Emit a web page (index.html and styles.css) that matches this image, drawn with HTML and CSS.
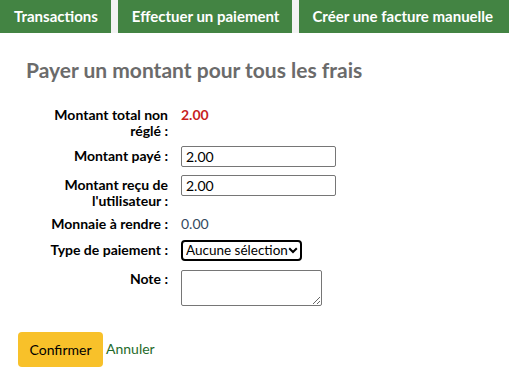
FILE: index.html
```html
<!DOCTYPE html>
<html lang="fr">
<head>
  <meta charset="UTF-8" />
  <meta name="viewport" content="width=device-width, initial-scale=1.0" />
  <title>Payer un montant</title>
  <link rel="stylesheet" href="styles.css">
</head>
<body>
  <div class="toolbar">
    <a class="tab" href="#">Transactions</a>
    <a class="tab" href="#">Effectuer un paiement</a>
    <a class="tab" href="#">Créer une facture manuelle</a>
  </div>

  <h2 class="title">Payer un montant pour tous les frais</h2>

  <form class="pay-form">
    <div class="rows">
      <label class="lbl">Montant total non réglé :</label>
      <div class="val total">2.00</div>

      <label class="lbl lbl-input" for="paid">Montant payé :</label>
      <div class="val"><input id="paid" class="field" type="text" value="2.00"></div>

      <label class="lbl lbl-input" for="collected">Montant reçu de l'utilisateur :</label>
      <div class="val"><input id="collected" class="field" type="text" value="2.00"></div>

      <label class="lbl">Monnaie à rendre :</label>
      <div class="val change">0.00</div>

      <label class="lbl lbl-input" for="type">Type de paiement :</label>
      <div class="val">
        <div class="select-wrap">
          <select id="type" class="picker">
            <option>Aucune sélection</option>
          </select>
          <svg class="chevron" width="10" height="7" viewBox="0 0 10 7">
            <path d="M1.2 1.2 L5 5 L8.8 1.2" fill="none" stroke="#000" stroke-width="2"/>
          </svg>
        </div>
      </div>

      <label class="lbl lbl-input" for="note">Note :</label>
      <div class="val"><textarea id="note" class="note"></textarea></div>
    </div>

    <div class="actions">
      <button type="button" class="btn-confirm">Confirmer</button>
      <a class="cancel" href="#">Annuler</a>
    </div>
  </form>
</body>
</html>
```

FILE: styles.css
```css
body {
  margin: 0;
  font-family: "Lato", "Open Sans", sans-serif;
  font-size: 14px;
  color: #000;
  background: #fff;
}

.toolbar {
  display: flex;
  gap: 7px;
  background: #f3f3f3;
}
.tab {
  display: block;
  height: 33px;
  line-height: 33px;
  padding: 0 13px 0 14px;
  background: #438443;
  color: #fff;
  font-weight: bold;
  font-size: 15px;
  text-decoration: none;
}
.tab:last-child {
  flex-grow: 1;
  padding: 0 13px;
}

.title {
  margin: 25px 0 0 26px;
  font-size: 21px;
  line-height: 24px;
  font-weight: bold;
  color: #6b6b6b;
}

.pay-form {
  margin: 0 0 0 18px;
}
.rows {
  display: grid;
  grid-template-columns: 120px 1fr;
  column-gap: 13px;
  row-gap: 8px;
  margin: 25px 0 0 30px;
  align-items: start;
}
.lbl {
  text-align: right;
  font-weight: bold;
  line-height: 15.5px;
}
.lbl-input {
  padding-top: 2px;
}
.val {
  line-height: 15.5px;
}
.total {
  color: #c81f1f;
  font-weight: bold;
}
.change {
  color: #34495e;
}

.field {
  box-sizing: border-box;
  width: 155px;
  height: 21px;
  margin: 0;
  padding: 0 4px;
  border: 1px solid #767676;
  border-radius: 2px;
  font-family: inherit;
  font-size: 14px;
}
.select-wrap {
  position: relative;
  width: 121px;
}
.picker {
  appearance: none;
  box-sizing: border-box;
  display: block;
  width: 121px;
  height: 21px;
  margin: 0;
  padding: 0 12px 0 3px;
  border: 2px solid #000;
  border-radius: 4px;
  background: #fff;
  color: #000;
  font-family: inherit;
  font-size: 13.5px;
}
.chevron {
  position: absolute;
  right: 4px;
  top: 7px;
  pointer-events: none;
}
.note {
  box-sizing: border-box;
  display: block;
  width: 141px;
  height: 36px;
  margin: 1px 0 0;
  border: 1px solid #767676;
  border-radius: 2px;
}

.actions {
  display: flex;
  align-items: center;
  gap: 3px;
  margin-top: 26px;
}
.btn-confirm {
  width: 85px;
  height: 35px;
  border: none;
  border-radius: 4px;
  background: #f8c12a;
  color: #000;
  font-family: inherit;
  font-size: 14px;
}
.cancel {
  color: #1f6b2b;
  text-decoration: none;
  margin-top: -2px;
}
```
